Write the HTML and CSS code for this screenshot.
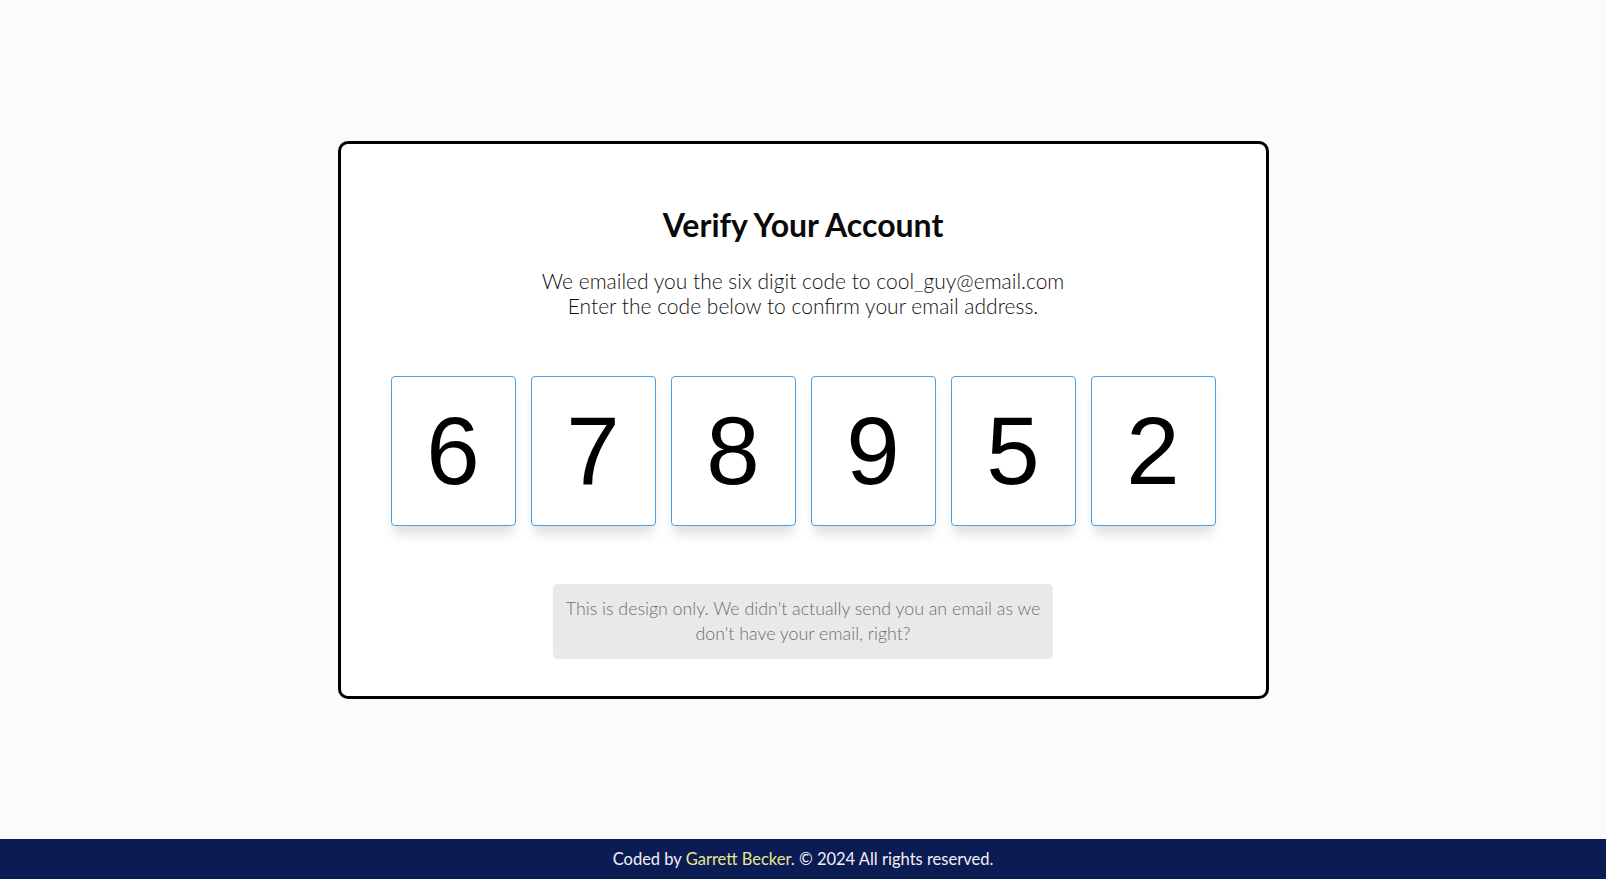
FILE: index.html
```html
<!DOCTYPE html>
<html lang="en">
<head>
<meta charset="utf-8">
<title>Verify Your Account</title>
<link rel="stylesheet" href="styles.css">
</head>
<body>
<main class="main">
  <section class="card">
    <h1 class="title">Verify Your Account</h1>
    <p class="lead">We emailed you the six digit code to cool_guy@email.com<br>Enter the code below to confirm your email address.</p>
    <div class="code">
      <input class="digit" type="text" maxlength="1" value="6">
      <input class="digit" type="text" maxlength="1" value="7">
      <input class="digit" type="text" maxlength="1" value="8">
      <input class="digit" type="text" maxlength="1" value="9">
      <input class="digit" type="text" maxlength="1" value="5">
      <input class="digit" type="text" maxlength="1" value="2">
    </div>
    <p class="note">This is design only. We didn't actually send you an email as we don't have your email, right?</p>
  </section>
</main>
<footer class="footer">
  <p>Coded by <a href="#">Garrett Becker</a>. © 2024 All rights reserved.</p>
</footer>
</body>
</html>
```
FILE: styles.css
```css
* { box-sizing: border-box; }
html, body { margin: 0; padding: 0; }
body {
  min-height: 100vh;
  display: flex;
  flex-direction: column;
  background: #fafbfd;
  font-family: Lato, "Noto Sans", sans-serif;
  color: #111;
}
.main {
  flex: 1;
  display: flex;
  align-items: center;
  justify-content: center;
}
.card {
  width: 931px;
  height: 558px;
  background: #fff;
  border: 3px solid #000;
  border-radius: 10px;
  padding-top: 62px;
  display: flex;
  flex-direction: column;
  align-items: center;
}
.title {
  margin: 0;
  font-size: 32px;
  line-height: 38px;
  font-weight: 700;
  color: #0a0a0a;
}
.lead {
  margin: 24px 0 0;
  font-size: 21px;
  line-height: 25.5px;
  font-weight: 300;
  text-align: center;
  color: #111;
}
.code {
  margin-top: 57px;
  display: flex;
  gap: 15px;
}
.digit {
  width: 125px;
  height: 150px;
  border: 1px solid #4a9fe2;
  border-radius: 4px;
  background: #fff;
  box-shadow: 0 11px 12px -3px rgba(0, 0, 0, 0.13);
  font-family: "Liberation Sans", Arial, sans-serif;
  font-size: 96px;
  text-align: center;
  color: #000;
  padding: 0;
  outline: none;
}
.note {
  margin: 58px 0 0;
  width: 500px;
  height: 75px;
  background: #e9e9e9;
  border-radius: 5px;
  padding: 0 10px;
  display: flex;
  align-items: center;
  justify-content: center;
  text-align: center;
  font-size: 17.8px;
  line-height: 25.5px;
  font-weight: 300;
  color: #6f6f6f;
}
.footer {
  height: 40px;
  background: #0b1b54;
  display: flex;
  align-items: center;
  justify-content: center;
}
.footer p {
  margin: 0;
  font-size: 16.5px;
  color: #f1f1f1;
}
.footer a {
  color: #e6e88f;
  text-decoration: none;
}
```
